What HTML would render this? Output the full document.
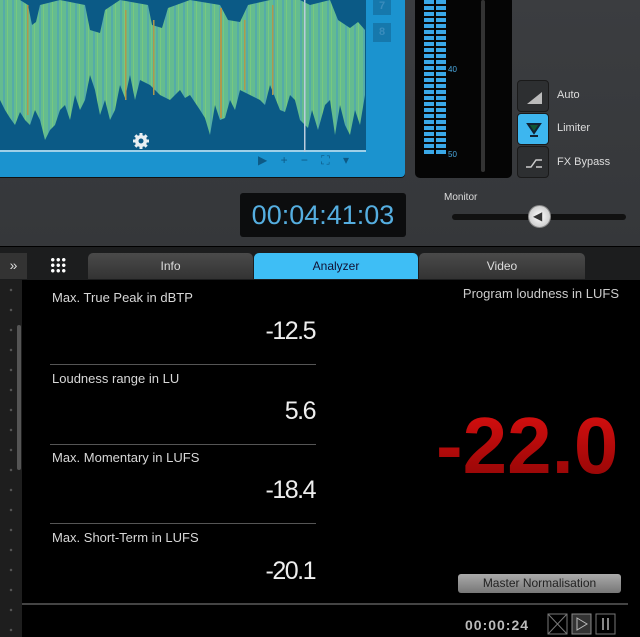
<!DOCTYPE html>
<html><head><meta charset="utf-8"><style>
*{margin:0;padding:0;box-sizing:border-box}
body{width:640px;height:637px;overflow:hidden;background:#000;font-family:"Liberation Sans",sans-serif;position:relative}
.a{position:absolute}
.top{left:0;top:0;width:640px;height:246px;background:linear-gradient(#3b3d40,#35373a)}
.lbl{color:#ddd;font-size:11px}
.tab{top:253px;height:26px;background:linear-gradient(#4a4a4a,#333);border-radius:5px 5px 0 0;color:#ddd;font-size:12px;text-align:center;line-height:27px}
.ml{left:52px;color:#d8d8d8;font-size:13px}
.mv{right:325px;color:#eee;font-size:25px;letter-spacing:-1.5px}
.sep{left:50px;width:266px;height:1px;background:#555}
.btn{left:517px;width:32px;height:32px;border-radius:4px;background:#2d2f31;border:1px solid #1a1a1a}
</style></head><body>
<div class="a top"></div>
<!-- blue frame -->
<div class="a" style="left:0;top:0;width:405px;height:177px;background:#1b93cf;border-radius:0 0 4px 0;box-shadow:0 1px 0 #111"></div>
<svg class="a" style="left:0;top:0" width="366" height="152">
<defs><pattern id="st" width="9" height="10" patternUnits="userSpaceOnUse"><rect width="9" height="10" fill="#64bc90"/><rect x="3" width="2" height="10" fill="#55aca8"/><rect x="7" width="1" height="10" fill="#78c880"/></pattern></defs>
<rect width="366" height="152" fill="#0b5a86"/>
<path fill="url(#st)" d="M0,0 20,0 28,5 32,25 36,22 40,5 60,0 85,5 90,30 100,33 105,10 120,0 148,5 152,25 162,28 168,8 190,0 220,5 228,20 240,22 248,5 270,0 300,0 310,5 330,0 338,20 350,28 358,22 365,30 365,95 360,125 355,110 350,135 345,125 340,105 335,135 330,100 325,105 318,130 312,110 308,128 300,120 295,100 290,95 285,112 280,110 270,85 265,105 260,100 250,95 240,90 235,110 230,100 225,118 220,120 215,105 210,135 205,118 200,110 190,95 185,98 180,90 170,100 160,95 150,85 140,80 135,100 130,75 125,98 120,85 115,110 110,120 105,100 100,115 95,90 90,75 85,100 80,110 75,95 70,120 65,105 60,110 55,125 50,130 45,140 40,120 35,110 30,125 25,120 20,112 15,125 10,118 5,110 0,100Z"/>
<g fill="#b0984c"><rect x="27" y="5" width="1.5" height="110"/><rect x="125" y="10" width="1.5" height="90"/><rect x="153" y="20" width="1.5" height="75"/><rect x="220" y="8" width="2" height="110"/><rect x="244" y="20" width="1.5" height="70"/><rect x="272" y="5" width="1.5" height="90"/></g>
<rect x="0" y="150" width="366" height="2" fill="#9fd0e8"/>
<rect x="304" y="0" width="1.5" height="152" fill="#bcd"/>
</svg>
<div class="a" style="left:373px;top:0;width:18px;height:15px;background:#1678ac;color:#3a8cbc;font-size:11px;text-align:center;font-weight:bold">7</div>
<div class="a" style="left:373px;top:23px;width:18px;height:19px;background:#1678ac;color:#3a8cbc;font-size:11px;text-align:center;line-height:19px;font-weight:bold">8</div>
<svg class="a" style="left:132px;top:132px" width="18" height="18"><g fill="#e8eef2"><circle cx="9" cy="9" r="6"/><rect x="7.5" y="1" width="3" height="16"/><rect x="1" y="7.5" width="16" height="3"/><rect x="7.5" y="1" width="3" height="16" transform="rotate(45 9 9)"/><rect x="7.5" y="1" width="3" height="16" transform="rotate(-45 9 9)"/></g><circle cx="9" cy="9" r="2.5" fill="#0b5a86"/></svg>
<div class="a" style="left:258px;top:153px;color:#0d5a86;font-size:12px;word-spacing:10px">▶ + − ⛶ ▾</div>
<!-- meter -->
<div class="a" style="left:415px;top:-4px;width:97px;height:182px;background:#050505;border-radius:5px"></div>
<div class="a" style="left:424px;top:0;width:22px;height:154px;background:repeating-linear-gradient(#3aa8e8 0 4px,#0a0a0a 4px 6px)"></div>
<div class="a" style="left:434px;top:0;width:2px;height:154px;background:#050505"></div>
<div class="a" style="left:448px;top:65px;color:#4aa8e0;font-size:8px">40</div>
<div class="a" style="left:448px;top:150px;color:#4aa8e0;font-size:8px">50</div>
<div class="a" style="left:481px;top:0;width:4px;height:172px;background:#333;border-radius:2px"></div>
<!-- buttons -->
<div class="a btn" style="top:80px"><svg width="32" height="32"><path d="M9 23L24 11V23Z" fill="#bbb"/></svg></div>
<div class="a btn" style="top:113px;background:#3db6ef"><svg width="32" height="32"><path d="M10 10H22L16 19Z M12 22H20" fill="#153" stroke="#123" stroke-width="2"/></svg></div>
<div class="a btn" style="top:146px"><svg width="32" height="32"><path d="M8 20H13L18 13H24M18 20H24" stroke="#ccc" stroke-width="1.5" fill="none"/></svg></div>
<div class="a lbl" style="left:557px;top:89px">Auto</div>
<div class="a lbl" style="left:557px;top:122px">Limiter</div>
<div class="a lbl" style="left:557px;top:156px">FX Bypass</div>
<!-- timecode -->
<div class="a" style="left:240px;top:193px;width:166px;height:44px;background:#0c0d0e;border-radius:3px;color:#55aee0;font-size:27px;text-align:center;line-height:44px">00:04:41:03</div>
<div class="a lbl" style="left:444px;top:192px;font-size:10px">Monitor</div>
<div class="a" style="left:452px;top:214px;width:174px;height:6px;background:#111;border-radius:3px"></div>
<div class="a" style="left:528px;top:205px;width:23px;height:23px;border-radius:50%;background:radial-gradient(#fff,#bbb);border:1px solid #888"></div>
<div class="a" style="left:533px;top:209px;color:#333;font-size:12px">◀</div>
<!-- tab bar -->
<div class="a" style="left:0;top:247px;width:640px;height:33px;background:#1c1d1e"></div>
<div class="a" style="left:0;top:253px;width:27px;height:26px;background:#333;color:#ddd;font-size:14px;text-align:center;line-height:24px">»</div>
<div class="a" style="left:50px;top:257px;width:16px;height:16px;background:radial-gradient(circle,#fff 1.5px,transparent 2px) 0 0/5.5px 5.5px"></div>
<div class="a tab" style="left:88px;width:165px">Info</div>
<div class="a tab" style="left:254px;width:164px;background:#3ebef5;color:#113">Analyzer</div>
<div class="a tab" style="left:419px;width:166px">Video</div>
<!-- left strip -->
<div class="a" style="left:0;top:280px;width:22px;height:357px;background:#1e1e1e;background-image:radial-gradient(circle,#555 1px,transparent 1.5px);background-size:22px 20px"></div>
<div class="a" style="left:17px;top:325px;width:4px;height:145px;background:#555;border-radius:2px"></div>
<!-- metrics -->
<div class="a ml" style="top:290px">Max. True Peak in dBTP</div>
<div class="a mv" style="top:317px">-12.5</div>
<div class="a sep" style="top:364px"></div>
<div class="a ml" style="top:371px">Loudness range in LU</div>
<div class="a mv" style="top:397px">5.6</div>
<div class="a sep" style="top:444px"></div>
<div class="a ml" style="top:450px">Max. Momentary in LUFS</div>
<div class="a mv" style="top:476px">-18.4</div>
<div class="a sep" style="top:523px"></div>
<div class="a ml" style="top:530px">Max. Short-Term in LUFS</div>
<div class="a mv" style="top:557px">-20.1</div>
<div class="a" style="right:21px;top:286px;color:#ccc;font-size:13px">Program loudness in LUFS</div>
<div class="a" style="left:436px;top:400px;font-size:80px;font-weight:bold;color:#b80c0c;background:linear-gradient(#e01010,#8a0505);-webkit-background-clip:text;-webkit-text-fill-color:transparent">-22.0</div>
<div class="a" style="left:458px;top:574px;width:163px;height:19px;background:linear-gradient(#aaa,#777);border-radius:3px;color:#222;font-size:12px;text-align:center;line-height:19px">Master Normalisation</div>
<div class="a" style="left:22px;top:603px;width:606px;height:2px;background:#444"></div>
<div class="a" style="left:465px;top:617px;color:#bbb;font-size:14px;font-weight:bold;letter-spacing:1px">00:00:24</div>
<svg class="a" style="left:545px;top:612px" width="75" height="24"><rect x="3" y="2" width="19" height="20" fill="none" stroke="#777"/><path d="M3 2L22 22M22 2L3 22" stroke="#777"/><rect x="27" y="2" width="19" height="20" fill="#333" stroke="#888"/><path d="M32 6L42 12L32 18Z" fill="none" stroke="#bbb"/><rect x="51" y="2" width="19" height="20" fill="none" stroke="#777"/><path d="M58 6V18M63 6V18" stroke="#888" stroke-width="2"/></svg>
</body></html>
